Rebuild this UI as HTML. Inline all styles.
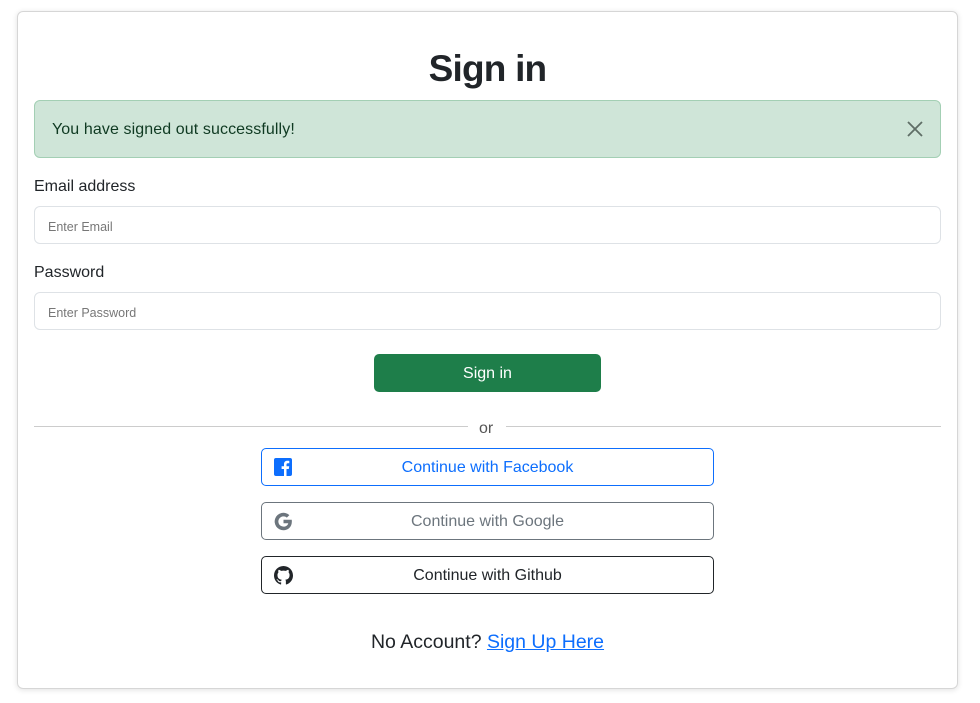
<!DOCTYPE html>
<html><head><meta charset="utf-8"><style>
*{box-sizing:border-box;margin:0;padding:0}
body{width:980px;height:703px;background:#fff;font-family:"Liberation Sans",sans-serif;color:#212529;position:relative}
.card{position:absolute;left:17px;top:11px;width:941px;height:678px;border:1px solid #d6d6d6;border-radius:6px;box-shadow:0 1px 6px rgba(0,0,0,.12)}
.abs{position:absolute}
h1{position:absolute;left:0;width:975px;top:48px;text-align:center;font-size:37px;font-weight:bold;letter-spacing:-0.8px}
.alert{left:34px;top:100px;width:907px;height:58px;background:#cfe5d8;border:1px solid #a3cfb4;border-radius:6px;color:#0f3a22;font-size:16px;letter-spacing:0.1px;padding:20px 17px}
.lbl{left:34px;font-size:16px}
.inp{left:34px;width:907px;height:38px;border:1px solid #dee2e6;border-radius:6px;font-size:12.5px;color:#777;padding:13px 13px}
.btn{left:374px;top:354px;width:227px;height:38px;background:#1e7e4a;border-radius:5px;color:#fff;font-size:16px;text-align:center;line-height:39px}
.hr{top:426px;height:1px;background:#ccc}
.or{left:479px;top:420px;font-size:16px;color:#555}
.sb{left:261px;width:453px;height:38px;border:1px solid;border-radius:5px;font-size:16px;text-align:center;line-height:38px}
.sb svg{position:absolute;left:12px;top:9px}
</style></head><body>
<div class="card"></div>
<h1>Sign in</h1>
<div class="abs alert">You have signed out successfully!
<svg class="abs" style="left:872px;top:20px" width="16" height="16" viewBox="0 0 16 16"><path d="M1 1L15 15M15 1L1 15" stroke="#5f6e66" stroke-width="1.8"/></svg></div>
<div class="abs lbl" style="top:178px">Email address</div>
<div class="abs inp" style="top:206px">Enter Email</div>
<div class="abs lbl" style="top:264px">Password</div>
<div class="abs inp" style="top:292px">Enter Password</div>
<div class="abs btn">Sign in</div>
<div class="abs hr" style="left:34px;width:434px"></div>
<div class="abs hr" style="left:506px;width:435px"></div>
<div class="abs or">or</div>
<div class="abs sb" style="top:448px;border-color:#0d6efd;color:#0d6efd">
<svg width="18" height="18" viewBox="0 0 18 18"><rect width="18" height="18" rx="2" fill="#0d6efd"/><path d="M12.5 18V11h2.3l.4-2.7h-2.7V6.6c0-.8.3-1.3 1.4-1.3h1.4V2.9c-.3 0-1.1-.1-2-.1-2 0-3.3 1.2-3.3 3.4v2.1H7.6V11H10v7z" fill="#fff"/></svg>Continue with Facebook</div>
<div class="abs sb" style="top:502px;border-color:#6c757d;color:#6c757d">
<svg width="19" height="19" viewBox="0 0 20 20"><path d="M18.8 8.2H10v3.6h5c-.5 2.3-2.5 3.6-5 3.6a5.4 5.4 0 1 1 3.5-9.5l2.7-2.6A9.2 9.2 0 1 0 10 19.2c4.6 0 8.8-3.3 8.8-9.2 0-.6-.1-1.2-.1-1.8z" fill="#6c757d"/></svg>Continue with Google</div>
<div class="abs sb" style="top:556px;border-color:#212529;color:#212529">
<svg width="19" height="19" viewBox="0 0 16 16"><path fill="#212529" d="M8 0C3.58 0 0 3.58 0 8c0 3.54 2.29 6.53 5.47 7.59.4.07.55-.17.55-.38 0-.19-.01-.82-.01-1.49-2.010.37-2.53-.49-2.69-.94-.09-.23-.48-.94-.82-1.13-.28-.15-.68-.52-.01-.53.63-.01 1.08.58 1.23.82.72 1.21 1.87.87 2.33.66.07-.52.28-.87.51-1.07-1.78-.2-3.64-.89-3.64-3.95 0-.87.31-1.59.82-2.15-.08-.2-.36-1.02.08-2.12 0 0 .67-.21 2.2.82.64-.18 1.32-.27 2-.27.68 0 1.36.09 2 .27 1.53-1.04 2.2-.82 2.2-.82.44 1.1.16 1.92.08 2.12.51.56.82 1.27.82 2.15 0 3.07-1.87 3.75-3.65 3.95.29.25.54.73.54 1.48 0 1.07-.01 1.93-.01 2.2 0 .21.15.46.55.38A8.013 8.013 0 0016 8c0-4.42-3.58-8-8-8z"/></svg>Continue with Github</div>
<div class="abs" style="left:0;width:975px;top:631px;text-align:center;font-size:19.5px">No Account? <span style="color:#0d6efd;text-decoration:underline">Sign Up Here</span></div>
</body></html>
